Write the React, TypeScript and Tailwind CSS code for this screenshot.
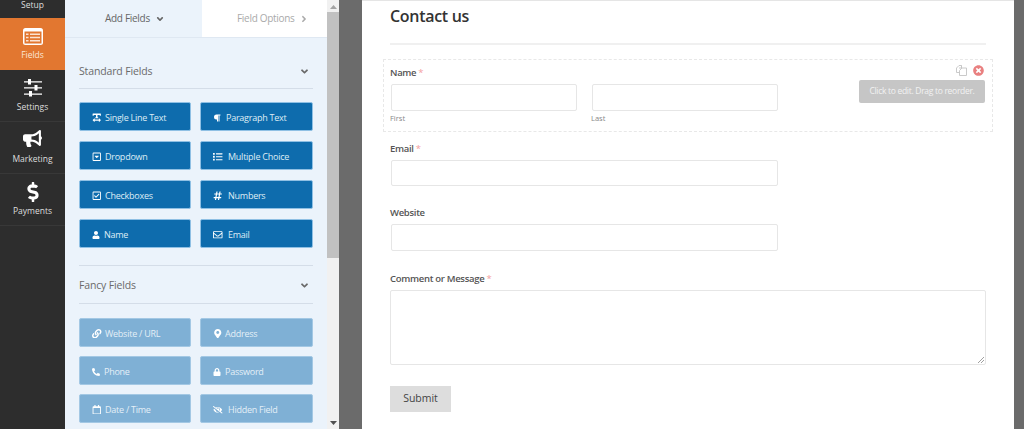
import React from 'react';
import { IconType } from 'react-icons';
import {
    FaAngleDown, FaAngleRight, FaBullhorn, FaDollarSign, FaEyeSlash, FaHashtag, FaLink, FaList, FaLock,
    FaMapMarkerAlt, FaParagraph, FaPhoneAlt, FaRegCalendar, FaRegCaretSquareDown, FaRegCheckSquare,
    FaRegEnvelope, FaTextWidth, FaTimesCircle, FaUser,
} from 'react-icons/fa';

const font = { fontFamily: '"Open Sans", sans-serif' };

const FieldsIcon = () => (
    <svg className="w-[20px] h-[17px] mb-[4px]" viewBox="0 0 20 17">
        <rect width="20" height="17" rx="2.5" fill="#fff" />
        <rect x="1.5" y="3.5" width="17" height="12" fill="#e27730" />
        <path d="M3 5.5h2.5v1.6H3zM7 5.5h10v1.6H7zM3 8.7h2.5v1.6H3zM7 8.7h10v1.6H7zM3 11.9h2.5v1.6H3zM7 11.9h10v1.6H7z" fill="#fbe3d2" />
    </svg>
);

const SettingsIcon = () => (
    <svg className="w-[18px] h-[18px] mb-[4px]" viewBox="0 0 18 18">
        <path d="M0 2.2h18v1.3H0zM0 8.3h18v1.3H0zM0 14.4h18v1.3H0z" fill="#fff" />
        <path d="M4 0h3v5.5H4zM10.5 6h3v5.5h-3zM5 12h3v5.5H5z" fill="#fff" />
    </svg>
);

const navItems: { label: string; icon: React.ReactNode; active?: boolean }[] = [
    { label: 'Fields', icon: <FieldsIcon />, active: true },
    { label: 'Settings', icon: <SettingsIcon /> },
    { label: 'Marketing', icon: <FaBullhorn className="text-[19px] mb-[5px]" /> },
    { label: 'Payments', icon: <FaDollarSign className="text-[20px] mb-[3px]" /> },
];

type Field = { label: string; icon: IconType; slot: string; size?: string };

const standardFields: Field[] = [
    { label: 'Single Line Text', icon: FaTextWidth, slot: 'w-[13px]' },
    { label: 'Paragraph Text', icon: FaParagraph, slot: 'w-[13px]', size: 'text-[8px]' },
    { label: 'Dropdown', icon: FaRegCaretSquareDown, slot: 'w-[13px]' },
    { label: 'Multiple Choice', icon: FaList, slot: 'w-[15px]' },
    { label: 'Checkboxes', icon: FaRegCheckSquare, slot: 'w-[13px]' },
    { label: 'Numbers', icon: FaHashtag, slot: 'w-[15px]' },
    { label: 'Name', icon: FaUser, slot: 'w-[12px]', size: 'text-[8px]' },
    { label: 'Email', icon: FaRegEnvelope, slot: 'w-[15px]' },
];

const fancyFields: Field[] = [
    { label: 'Website / URL', icon: FaLink, slot: 'w-[13px]' },
    { label: 'Address', icon: FaMapMarkerAlt, slot: 'w-[12px]' },
    { label: 'Phone', icon: FaPhoneAlt, slot: 'w-[12px]', size: 'text-[8px]' },
    { label: 'Password', icon: FaLock, slot: 'w-[12px]', size: 'text-[8px]' },
    { label: 'Date / Time', icon: FaRegCalendar, slot: 'w-[13px]' },
    { label: 'Hidden Field', icon: FaEyeSlash, slot: 'w-[15px]' },
];

const FieldButton: React.FC<Field & { fancy?: boolean }> = ({ label, icon: Icon, slot, size, fancy }) => (
    <div className={`h-[29px] rounded-[2px] border flex items-center pl-[12px] pt-[2px] text-[9px] tracking-[-0.25px] ${fancy ? 'bg-[#7fb0d5] border-[#a3c8e4] text-[#e4eff7]' : 'bg-[#0e6cad] border-[#8fc0e4] text-[#dfecf5]'}`}>
        <span className={`${slot} shrink-0`}><Icon className={`${size || 'text-[9.5px]'} text-white`} /></span>
        <span>{label}</span>
    </div>
);

const Label: React.FC<{ text: string; required?: boolean }> = ({ text, required }) => (
    <div className="text-[9.5px] leading-[14px] font-semibold tracking-[-0.3px] text-[#555]">
        {text}
        {required && <span className="text-[#f4a0a0] ml-[2px] font-normal">*</span>}
    </div>
);

const inputClass = 'border border-[#e6e6e6] rounded-[2px] bg-white';

export default function App() {
    return (
        <div className="w-[1024px] h-[429px] overflow-hidden flex bg-[#6b6b6b]" style={font}>
            {/* left nav, Setup item is scrolled mostly out of view */}
            <div className="w-[65px] h-full bg-[#2d2d2d] shrink-0 overflow-hidden text-white">
                <div className="h-[18px] flex items-end justify-center pb-[9px] text-[8.5px] leading-none text-[#ddd]">Setup</div>
                {navItems.map(item => (
                    <div key={item.label} className={`h-[52px] flex flex-col items-center justify-end pb-[9px] border-b ${item.active ? 'bg-[#e27730] border-[#e27730]' : 'border-[#383838]'}`}>
                        {item.icon}
                        <span className={`text-[8.5px] leading-[11px] ${item.active ? 'text-[#fbe6d6]' : 'text-[#ddd]'}`}>{item.label}</span>
                    </div>
                ))}
            </div>

            {/* field panel */}
            <div className="w-[262px] h-full bg-[#ebf3fb] shrink-0 overflow-hidden">
                <div className="h-[38px] flex border-b border-[#dfe8f2] text-[10px] tracking-[-0.3px]">
                    <div className="w-[137px] flex items-center pl-[40px] text-[#666] gap-[5px]">
                        Add Fields <FaAngleDown className="text-[10px]" />
                    </div>
                    <div className="flex-1 bg-white flex items-center pl-[35px] text-[#aaa] gap-[4px]">
                        Field Options <FaAngleRight className="text-[10px]" />
                    </div>
                </div>
                <div className="px-[14px]">
                    <div className="h-[51px] pt-[17px] flex items-center justify-between border-b border-[#d4dde8] text-[#6a6a6a] text-[10.5px] tracking-[-0.15px]">
                        <span>Standard Fields</span>
                        <FaAngleDown className="text-[11px] mr-[3px]" />
                    </div>
                    <div className="grid grid-cols-[112px_113px] gap-x-[9px] gap-y-[10px] pt-[13px]">
                        {standardFields.map(f => <FieldButton key={f.label} {...f} />)}
                    </div>
                    <div className="mt-[17px] border-t border-[#d4dde8] h-[39px] pt-[2px] flex items-center justify-between border-b text-[#6a6a6a] text-[10.5px] tracking-[-0.15px]">
                        <span>Fancy Fields</span>
                        <FaAngleDown className="text-[11px] mr-[3px]" />
                    </div>
                    <div className="grid grid-cols-[112px_113px] gap-x-[9px] gap-y-[9px] pt-[14px]">
                        {fancyFields.map(f => <FieldButton key={f.label} {...f} fancy />)}
                    </div>
                </div>
            </div>

            {/* scrollbar */}
            <div className="w-[12px] h-full bg-[#f1f1f1] shrink-0 flex flex-col items-center">
                <svg className="mt-[5px] w-[7px] h-[4px] shrink-0" viewBox="0 0 7 4"><path d="M3.5 0 7 4H0z" fill="#a3a3a3" /></svg>
                <div className="w-full h-[246px] mt-[3px] bg-[#c1c1c1]" />
                <svg className="mt-auto mb-[4px] w-[7px] h-[4px] shrink-0" viewBox="0 0 7 4"><path d="M3.5 4 7 0H0z" fill="#505050" /></svg>
            </div>

            {/* preview canvas */}
            <div className="w-[23px] shrink-0" />
            <div className="w-[652px] h-full bg-white shrink-0 overflow-hidden border-t border-[#e5e5e5] pl-[28px] pr-[28px]">
                <div className="h-[44px] border-b-2 border-[#f0f0f0] text-[16px] font-semibold tracking-[-0.3px] text-[#333] leading-[30px]">Contact us</div>

                <div className="relative mt-[14px] -mx-[7px] h-[73px] border border-dashed border-[#e8e8e8] px-[6px] pt-[6px]">
                    <Label text="Name" required />
                    <div className="flex gap-[15px] mt-[4px] ml-[1px]">
                        <div className="w-[186px]">
                            <div className={`${inputClass} h-[27px]`} />
                            <div className="text-[7.5px] leading-[12px] mt-[1px] -ml-[1px] text-[#888]">First</div>
                        </div>
                        <div className="w-[186px]">
                            <div className={`${inputClass} h-[27px]`} />
                            <div className="text-[7.5px] leading-[12px] mt-[1px] -ml-[1px] text-[#888]">Last</div>
                        </div>
                    </div>
                    {/* hover actions sit over the field */}
                    <div className="absolute right-[7px] top-[5px] flex flex-col items-end">
                        <div className="flex items-center gap-[6px] pr-[1px]">
                            <svg className="w-[11px] h-[11px]" viewBox="0 0 11 11" fill="none" stroke="#c4c4c4" strokeWidth="0.9">
                                <path d="M3.5 7.5H.5V3L3 .5h2.5V3M5.5 .5V3H3" />
                                <path d="M3.5 10.5V5.5L6 3h4.5v7.5z" />
                            </svg>
                            <FaTimesCircle className="text-[11px] text-[#e98080]" />
                        </div>
                        <div className="mt-[4px] w-[126px] h-[23px] rounded-[2px] bg-[#c6c6c6] text-[#f2f2f2] text-[8.5px] tracking-[-0.3px] flex items-center justify-center">Click to edit. Drag to reorder.</div>
                    </div>
                </div>

                <div className="mt-[10px]">
                    <Label text="Email" required />
                    <div className={`${inputClass} h-[26px] w-[387px] ml-[1px] mt-[4px]`} />
                </div>
                <div className="mt-[20px]">
                    <Label text="Website" />
                    <div className={`${inputClass} h-[27px] w-[387px] ml-[1px] mt-[4px]`} />
                </div>
                <div className="mt-[21px]">
                    <Label text="Comment or Message" required />
                    <div className={`${inputClass} relative h-[75px] w-[596px] mt-[4px]`}>
                        <svg className="absolute right-[1px] bottom-[1px] w-[6px] h-[6px]" viewBox="0 0 6 6"><path d="M6 0 0 6M6 3 3 6" stroke="#888" strokeWidth="0.8" /></svg>
                    </div>
                </div>
                <div className="mt-[21px] w-[61px] h-[26px] bg-[#dddddd] text-[#444] text-[10.5px] flex items-center justify-center">Submit</div>
            </div>
            <div className="flex-1" />
        </div>
    );
}
